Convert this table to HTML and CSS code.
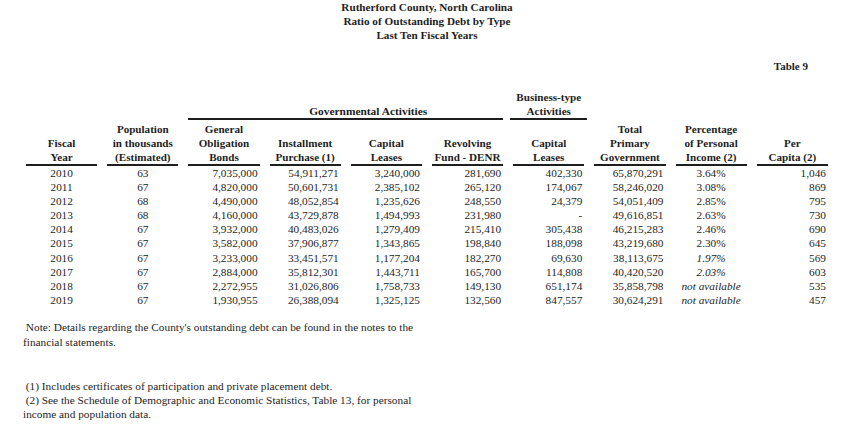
FILE: index.html
```html
<!DOCTYPE html>
<html>
<head>
<meta charset="utf-8">
<link rel="stylesheet" href="styles.css">
</head>
<body>
<div class="page">
  <header class="title">
    <div>Rutherford County, North Carolina</div>
    <div>Ratio of Outstanding Debt by Type</div>
    <div>Last Ten Fiscal Years</div>
  </header>
  <div class="table-no">Table 9</div>
  <table class="debt">
    <colgroup>
      <col><col><col><col><col><col><col><col><col><col>
    </colgroup>
    <thead>
      <tr class="group-row">
        <th></th>
        <th></th>
        <th colspan="4" class="group"><div class="rule gov">Governmental Activities</div></th>
        <th class="group"><div class="rule biz">Business-type<br>Activities</div></th>
        <th></th>
        <th></th>
        <th></th>
      </tr>
      <tr class="col-row">
        <th><div class="rule">Fiscal<br>Year</div></th>
        <th><div class="rule">Population<br>in thousands<br>(Estimated)</div></th>
        <th><div class="rule">General<br>Obligation<br>Bonds</div></th>
        <th><div class="rule">Installment<br>Purchase (1)</div></th>
        <th><div class="rule">Capital<br>Leases</div></th>
        <th><div class="rule">Revolving<br>Fund - DENR</div></th>
        <th><div class="rule">Capital<br>Leases</div></th>
        <th><div class="rule">Total<br>Primary<br>Government</div></th>
        <th><div class="rule">Percentage<br>of Personal<br>Income (2)</div></th>
        <th><div class="rule">Per<br>Capita (2)</div></th>
      </tr>
    </thead>
    <tbody>
      <tr><td class="c">2010</td><td class="c">63</td><td>7,035,000</td><td>54,911,271</td><td>3,240,000</td><td>281,690</td><td>402,330</td><td>65,870,291</td><td class="c">3.64%</td><td>1,046</td></tr>
      <tr><td class="c">2011</td><td class="c">67</td><td>4,820,000</td><td>50,601,731</td><td>2,385,102</td><td>265,120</td><td>174,067</td><td>58,246,020</td><td class="c">3.08%</td><td>869</td></tr>
      <tr><td class="c">2012</td><td class="c">68</td><td>4,490,000</td><td>48,052,854</td><td>1,235,626</td><td>248,550</td><td>24,379</td><td>54,051,409</td><td class="c">2.85%</td><td>795</td></tr>
      <tr><td class="c">2013</td><td class="c">68</td><td>4,160,000</td><td>43,729,878</td><td>1,494,993</td><td>231,980</td><td>-</td><td>49,616,851</td><td class="c">2.63%</td><td>730</td></tr>
      <tr><td class="c">2014</td><td class="c">67</td><td>3,932,000</td><td>40,483,026</td><td>1,279,409</td><td>215,410</td><td>305,438</td><td>46,215,283</td><td class="c">2.46%</td><td>690</td></tr>
      <tr><td class="c">2015</td><td class="c">67</td><td>3,582,000</td><td>37,906,877</td><td>1,343,865</td><td>198,840</td><td>188,098</td><td>43,219,680</td><td class="c">2.30%</td><td>645</td></tr>
      <tr><td class="c">2016</td><td class="c">67</td><td>3,233,000</td><td>33,451,571</td><td>1,177,204</td><td>182,270</td><td>69,630</td><td>38,113,675</td><td class="c i">1.97%</td><td>569</td></tr>
      <tr><td class="c">2017</td><td class="c">67</td><td>2,884,000</td><td>35,812,301</td><td>1,443,711</td><td>165,700</td><td>114,808</td><td>40,420,520</td><td class="c i">2.03%</td><td>603</td></tr>
      <tr><td class="c">2018</td><td class="c">67</td><td>2,272,955</td><td>31,026,806</td><td>1,758,733</td><td>149,130</td><td>651,174</td><td>35,858,798</td><td class="c i">not available</td><td>535</td></tr>
      <tr><td class="c">2019</td><td class="c">67</td><td>1,930,955</td><td>26,388,094</td><td>1,325,125</td><td>132,560</td><td>847,557</td><td>30,624,291</td><td class="c i">not available</td><td>457</td></tr>
    </tbody>
  </table>
  <p class="note">&nbsp;Note: Details regarding the County's outstanding debt can be found in the notes to the financial statements.</p>
  <div class="footnotes">
    <p>&nbsp;(1) Includes certificates of participation and private placement debt.</p>
    <p>&nbsp;(2) See the Schedule of Demographic and Economic Statistics, Table 13, for personal income and population data.</p>
  </div>
</div>
</body>
</html>
```
FILE: styles.css
```css
html, body {
  margin: 0;
  padding: 0;
  background: #fff;
}
body {
  font-family: "Liberation Serif", "Times New Roman", serif;
  color: #1e1e1e;
}
.page {
  width: 850px;
  height: 425px;
  overflow: hidden;
}
.title {
  text-align: center;
  font-weight: bold;
  font-size: 11.2px;
  line-height: 14px;
  padding-left: 4px;
}
.table-no {
  margin-top: 17px;
  text-align: right;
  padding-right: 42px;
  font-weight: bold;
  font-size: 11px;
  line-height: 14px;
}
.debt {
  margin-top: 17px;
  margin-left: 21px;
  border-collapse: separate;
  border-spacing: 0;
  table-layout: fixed;
  width: 812px;
}
.debt col {
  width: 81.2px;
}
.debt th {
  padding: 0;
  font-weight: bold;
  font-size: 11.1px;
  line-height: 14px;
  text-align: center;
  vertical-align: bottom;
  white-space: nowrap;
}
.rule {
  margin: 0 5px;
  border-bottom: 2px solid #1e1e1e;
}
.rule.gov {
  padding-left: 45px;
  font-size: 11.4px;
}
.rule.biz {
  margin: 0 2px;
}
.col-row th {
  padding-top: 2px;
}
.debt td {
  padding: 0 7px 0 5px;
  font-size: 11.3px;
  line-height: 14.1px;
  text-align: right;
  white-space: nowrap;
}
.debt td.c {
  text-align: center;
  padding: 0 5px;
}
.debt td.i {
  font-style: italic;
}
.note {
  margin: 13px 0 0 23px;
  width: 400px;
  font-size: 11.3px;
  line-height: 15px;
}
.footnotes {
  margin: 29px 0 0 23px;
  width: 400px;
  font-size: 11.3px;
  line-height: 14px;
}
.footnotes p {
  margin: 0;
}
```
